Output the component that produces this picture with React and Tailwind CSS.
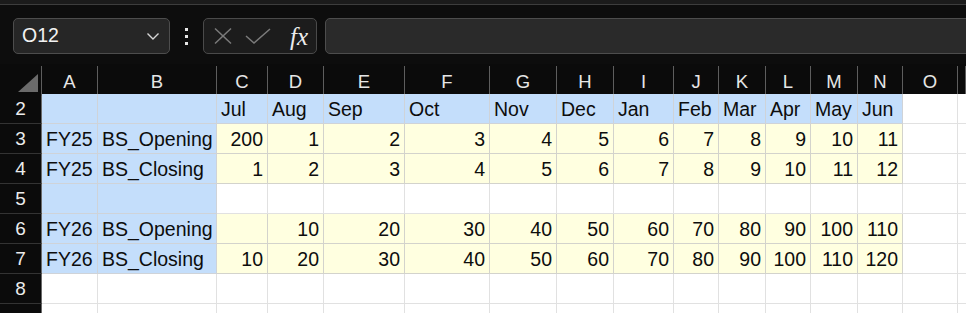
import React from "react";

const GRID =
  "grid grid-cols-[42px_56px_119px_51px_56px_81px_85px_67px_57px_60px_45px_47px_45px_47px_45px_55px_1fr]";

const letters = ["A", "B", "C", "D", "E", "F", "G", "H", "I", "J", "K", "L", "M", "N", "O", ""];
const months = ["Jul", "Aug", "Sep", "Oct", "Nov", "Dec", "Jan", "Feb", "Mar", "Apr", "May", "Jun"];

const rows = [
  { n: 2, a: "", b: "", vals: months, fill: "blue", left: true },
  { n: 3, a: "FY25", b: "BS_Opening", vals: [200, 1, 2, 3, 4, 5, 6, 7, 8, 9, 10, 11], fill: "yellow" },
  { n: 4, a: "FY25", b: "BS_Closing", vals: [1, 2, 3, 4, 5, 6, 7, 8, 9, 10, 11, 12], fill: "yellow" },
  { n: 5, a: "", b: "", vals: Array(12).fill(""), fill: "white" },
  { n: 6, a: "FY26", b: "BS_Opening", vals: ["", 10, 20, 30, 40, 50, 60, 70, 80, 90, 100, 110], fill: "yellow" },
  { n: 7, a: "FY26", b: "BS_Closing", vals: [10, 20, 30, 40, 50, 60, 70, 80, 90, 100, 110, 120], fill: "yellow" },
  { n: 8, a: null, b: null, vals: Array(12).fill(""), fill: "white" },
  { n: "", a: null, b: null, vals: Array(12).fill(""), fill: "white" },
];

const fills = {
  blue: "bg-[#c4defb] border-[#cfd3d8]",
  yellow: "bg-[#ffffe0] border-[#d3d3cc]",
  white: "bg-white border-[#e1e1e1]",
};

function Cell({ fill, left, children }) {
  return (
    <div
      className={`h-[30px] border-r border-b flex items-center px-[4px] pt-[2px] overflow-hidden whitespace-nowrap text-[19.5px] text-[#0d0d0d] ${fills[fill]} ${
        left ? "justify-start" : "justify-end"
      }`}
    >
      {children}
    </div>
  );
}

function Toolbar() {
  return (
    <div className="flex items-start h-[59px] pt-[13px] pl-[13px]">
      <div className="w-[157px] h-[36px] rounded-[5px] bg-[#262626] border border-[#4d4d4d] flex items-center justify-between pl-[8px] pr-[9px]">
        <span className="text-[19.5px] text-[#f2f2f2]">O12</span>
        <svg width="14" height="9" viewBox="0 0 14 9">
          <polyline points="1.5,1.5 7,7 12.5,1.5" fill="none" stroke="#d6d6d6" strokeWidth="1.4" />
        </svg>
      </div>
      <div className="w-[33px] h-[36px] flex flex-col items-center justify-center gap-[4px]">
        <span className="w-[3px] h-[3px] bg-[#e6e6e6]" />
        <span className="w-[3px] h-[3px] bg-[#e6e6e6]" />
        <span className="w-[3px] h-[3px] bg-[#e6e6e6]" />
      </div>
      <div className="w-[114px] h-[36px] rounded-[5px] bg-[#1c1c1c] border border-[#4a4a4a] flex items-center pl-[9px] pr-[8px] gap-[12px]">
        <svg width="20" height="18" viewBox="0 0 20 18">
          <line x1="2" y1="1.5" x2="18" y2="16.5" stroke="#7b7b7b" strokeWidth="1.5" />
          <line x1="18" y1="1.5" x2="2" y2="16.5" stroke="#7b7b7b" strokeWidth="1.5" />
        </svg>
        <svg width="26" height="18" viewBox="0 0 26 18">
          <polyline points="1,9 9,16 25,2" fill="none" stroke="#7b7b7b" strokeWidth="1.5" />
        </svg>
        <span className="ml-auto text-[25px] italic leading-none text-[#ececec] font-['Liberation_Serif',serif]">
          fx
        </span>
      </div>
      <div className="flex-1 h-[36px] ml-[8px] -mr-[10px] rounded-[5px] bg-[#2a2a2a] border border-[#4d4d4d]" />
    </div>
  );
}

export default function App() {
  return (
    <div className="w-[966px] h-[313px] overflow-hidden bg-[#0d0d0d] font-['Liberation_Sans',Arial,sans-serif]">
      <div className="h-[5px] bg-[#1b1b1b] border-b border-[#3d3d3d]" />
      <Toolbar />
      <div className={`${GRID} h-[30px] bg-[#0b0b0b]`}>
        <div className="relative border-r border-[#5e5e5e] mt-[2px]">
          <svg className="absolute left-[18px] top-[8px]" width="20" height="18" viewBox="0 0 20 18">
            <polygon points="20,0 20,18 0,18" fill="#6b6b6b" />
          </svg>
        </div>
        {letters.map((l, i) => (
          <div
            key={i}
            className="border-r border-[#5e5e5e] mt-[2px] pt-[2px] flex items-center justify-center text-[18.5px] text-[#e6e6e6]"
          >
            {l}
          </div>
        ))}
      </div>
      {rows.map((r, k) => (
        <div key={k} className={GRID}>
          <div className="h-[30px] bg-[#0b0b0b] border-r border-b border-r-[#6a6a6a] border-b-[#333] pt-[2px] flex items-center justify-center text-[19px] text-[#ececec]">
            {r.n}
          </div>
          <Cell fill={r.a === null ? "white" : "blue"} left>
            {r.a}
          </Cell>
          <Cell fill={r.b === null ? "white" : "blue"} left>
            {r.b}
          </Cell>
          {r.vals.map((v, i) => (
            <Cell key={i} fill={r.fill} left={r.left}>
              {v}
            </Cell>
          ))}
          <Cell fill="white" />
          <Cell fill="white" />
        </div>
      ))}
    </div>
  );
}
